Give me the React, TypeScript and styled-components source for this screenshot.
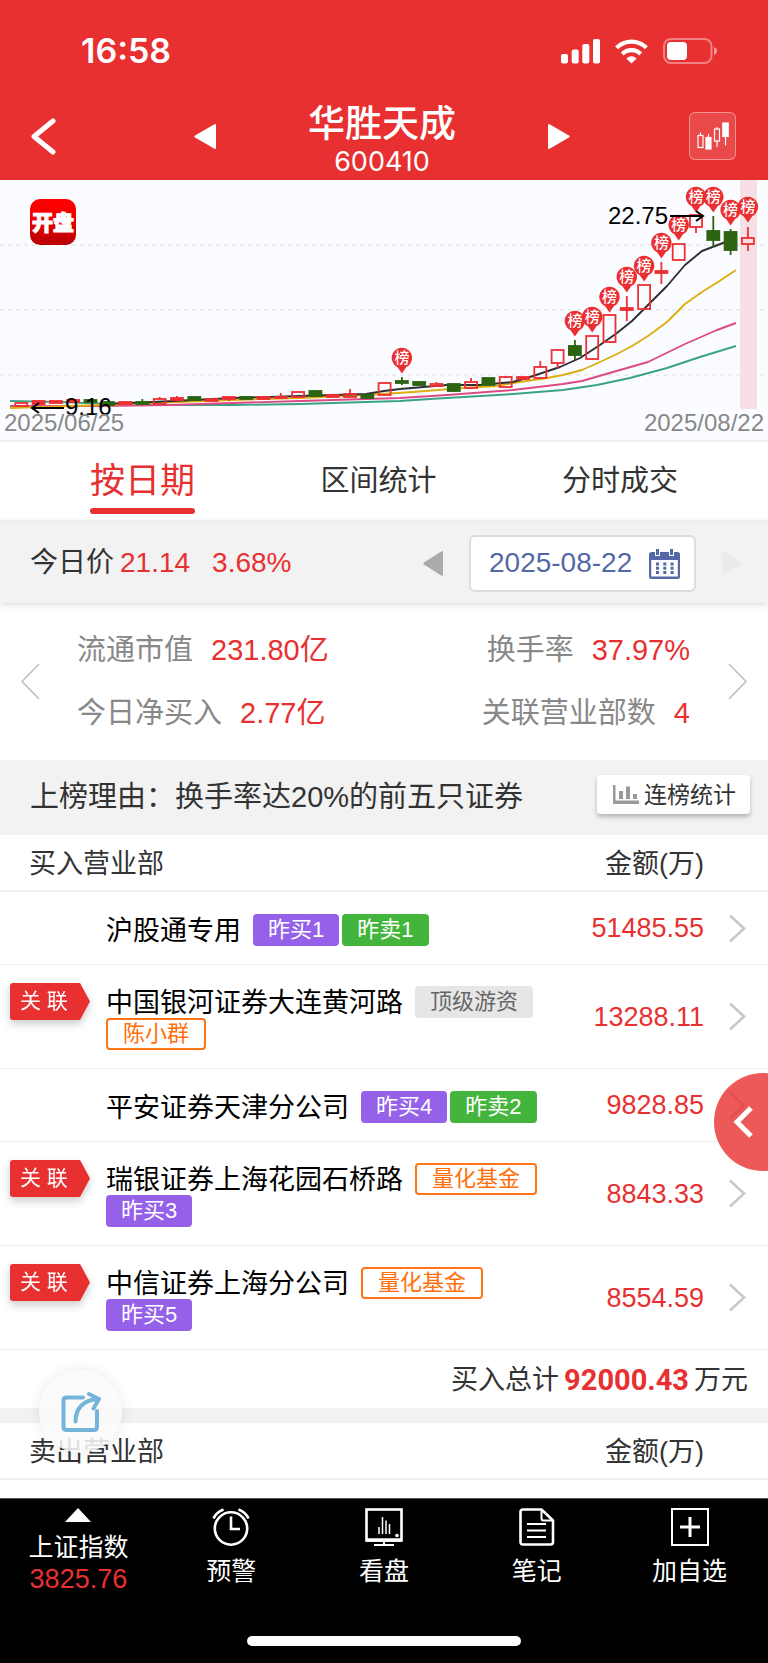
import React from "react";
import styled, { createGlobalStyle, css } from "styled-components";

const RED = "#e83030";
const SANS = '"Liberation Sans", "Noto Sans CJK SC", sans-serif';
const UI = 'Inter, "Noto Sans CJK SC", sans-serif';

const GlobalStyle = createGlobalStyle`
  *, *::before, *::after { box-sizing: border-box; }
  body { margin: 0; background: #fff; font-family: ${SANS}; color: #333; }
  button, input { font: inherit; color: inherit; margin: 0; padding: 0; border: 0; background: none; }
  button { cursor: pointer; }
  h1, h2, p, dl, dd, dt { margin: 0; font-weight: 400; }
  svg { display: block; }
`;

const Page = styled.div`
  width: 100%;
  overflow-x: hidden;
`;

/* ---------- header ---------- */

const Header = styled.header`
  background: ${RED};
  color: #fff;
  height: 180px;
`;

const StatusBar = styled.div`
  display: flex;
  justify-content: space-between;
  align-items: center;
  height: 94px;
  padding: 8px 51px 0 81px;
`;

const Clock = styled.span`
  font: 600 34px/40px ${UI};
`;

const StatusIcons = styled.div`
  display: flex;
  align-items: center;
  gap: 15px;
`;

const NavBar = styled.div`
  display: grid;
  grid-template-columns: 194px 1fr auto 1fr 198px;
  align-items: center;
  height: 84px;
`;

const IconButton = styled.button<{ $align?: string }>`
  display: flex;
  align-items: center;
  justify-content: ${(p) => p.$align || "center"};
`;

const BackButton = styled(IconButton)`
  padding-left: 31px;
  justify-content: flex-start;
  height: 68px;
  width: 90px;
`;

const StockTitle = styled.div`
  padding-top: 8px;
  text-align: center;
`;

const StockName = styled.h1`
  font-size: 37px;
  font-weight: 500;
  line-height: 44px;
`;

const StockCode = styled.p`
  font: 400 27px/30px ${UI};
`;

const CandleButton = styled(IconButton)`
  justify-self: end;
  width: 47px;
  height: 48px;
  margin-right: 32px;
  border: 1px solid rgba(255, 255, 255, 0.4);
  border-radius: 6px;
  background: rgba(255, 255, 255, 0.12);
`;

/* ---------- chart ---------- */

const ChartPanel = styled.section`
  background: #fbfcff;
  border-bottom: 2px solid #f2f2f2;

  svg {
    width: 100%;
    height: auto;
  }
`;

/* ---------- tabs ---------- */

const Tabs = styled.nav`
  display: flex;
  justify-content: space-between;
  padding: 0 90px;
  height: 78px;
`;

const Tab = styled.button<{ $active?: boolean }>`
  display: flex;
  flex-direction: column;
  align-items: stretch;
  justify-content: space-between;
  height: 72px;
  padding-top: 19px;
  font-size: 29px;
  line-height: 40px;
  color: #333;
  ${(p) =>
    p.$active &&
    css`
      font-size: 35px;
      color: ${RED};
      &::after {
        content: "";
        height: 6px;
        border-radius: 3px;
        background: ${RED};
      }
    `}
`;

/* ---------- price bar ---------- */

const PriceBar = styled.section`
  position: relative;
  display: flex;
  align-items: center;
  justify-content: space-between;
  height: 83px;
  padding: 3px 26px 0 30px;
  background: linear-gradient(#ededed, #f2f2f2 5px);
  box-shadow: 0 2px 6px rgba(0, 0, 0, 0.14);
  font-size: 28px;
  line-height: 40px;
`;

const Price = styled.p`
  display: flex;
  color: ${RED};

  span {
    color: #333;
  }
  span + strong {
    margin: 0 22px 0 6px;
  }
  strong {
    font-weight: 400;
  }
`;

const DatePicker = styled.div`
  display: flex;
  align-items: center;
  gap: 26px;
`;

const DateBox = styled.label`
  display: flex;
  align-items: center;
  justify-content: space-between;
  width: 227px;
  height: 57px;
  padding: 0 14px 0 18px;
  border: 2px solid #dcdcdc;
  border-radius: 6px;
  background: #fff;
  color: #5369a6;
`;

const DateInput = styled.input`
  width: 150px;
  outline: none;
`;

/* ---------- stats ---------- */

const Stats = styled.section`
  display: flex;
  align-items: center;
  justify-content: space-between;
  height: 157px;
  padding: 0 21px;
`;

const StatColumn = styled.dl<{ $right?: boolean }>`
  display: flex;
  flex-direction: column;
  gap: 23px;
  align-items: ${(p) => (p.$right ? "flex-end" : "flex-start")};
`;

const StatGroup = styled.div`
  display: flex;
  flex: 1;
  justify-content: space-between;
  padding: 0 38px 0 37px;
`;

const Stat = styled.div`
  display: flex;
  gap: 18px;
  font-size: 29px;
  line-height: 40px;

  dt {
    color: #888;
  }
  dd {
    color: ${RED};
  }
`;

/* ---------- reason ---------- */

const Reason = styled.section`
  display: flex;
  align-items: flex-start;
  justify-content: space-between;
  height: 75px;
  padding: 15px 18px 0 30px;
  background: #f2f2f2;

  h2 {
    font-size: 29px;
    line-height: 45px;
  }
`;

const StatsButton = styled.button`
  display: flex;
  align-items: center;
  gap: 5px;
  height: 39px;
  padding: 0 14px 0 16px;
  border-radius: 4px;
  background: #fff;
  box-shadow: 0 3px 4px rgba(0, 0, 0, 0.25);
  font-size: 23px;
  line-height: 30px;
`;

/* ---------- broker tables ---------- */

const Content = styled.main`
  position: relative;
`;

const BrokerTable = styled.table`
  width: 100%;
  table-layout: fixed;
  border-collapse: separate;
  border-spacing: 0;
  font-size: 27px;
  line-height: 32px;

  th {
    height: 57px;
    padding: 2px 0 0 29px;
    font-weight: 400;
    text-align: left;
    border-bottom: 2px solid #f2f2f2;
  }
  th:nth-child(2) {
    padding: 2px 0 0;
    text-align: right;
  }
  td {
    padding: 0;
    border-bottom: 1px solid #eee;
  }
`;

const LinkCol = styled.col`
  width: 106px;
`;
const AmountCol = styled.col`
  width: 144px;
`;
const ArrowCol = styled.col`
  width: 64px;
`;

const BrokerRow = styled.tr`
  height: 73px;
`;

const LinkCell = styled.td`
  vertical-align: top;
`;

const Ribbon = styled.div`
  margin: 18px 0 0 10px;
  width: 80px;
  filter: drop-shadow(0 4px 4px rgba(0, 0, 0, 0.2));

  span {
    display: block;
    height: 37px;
    padding-left: 10px;
    border-radius: 3px;
    background: ${RED};
    clip-path: polygon(0 0, 70px 0, 80px 50%, 70px 100%, 0 100%);
    color: #fff;
    font-size: 21px;
    line-height: 36px;
  }
`;

const NameCell = styled.td`
  && {
    padding: 21px 0 18px;
  }
`;

const NameWrap = styled.div`
  display: flex;
  flex-wrap: wrap;
  align-items: flex-start;
  column-gap: 3px;
`;

const BrokerName = styled.span`
  height: 32px;
  margin-right: 9px;
  color: #000;
  line-height: 34px;
`;

type Tone = "buy" | "sell" | "plain" | "fund";

const tones = {
  buy: css`
    background: #9461e8;
    color: #fff;
  `,
  sell: css`
    background: #43b53c;
    color: #fff;
  `,
  plain: css`
    background: #e6e6e6;
    color: #666;
  `,
  fund: css`
    border: 2px solid #ff7414;
    color: #ff6f0a;
  `,
};

const Tag = styled.span<{ $tone: Tone }>`
  display: flex;
  align-items: center;
  height: 32px;
  padding: 0 15px;
  border-radius: 4px;
  font-size: 22px;
  line-height: 28px;
  ${(p) => tones[p.$tone]}
`;

const AmountCell = styled.td`
  text-align: right;
  color: ${RED};
`;

const ArrowCell = styled.td`
  svg {
    margin-left: 24px;
  }
`;

const Total = styled.p`
  display: flex;
  align-items: center;
  justify-content: flex-end;
  gap: 5px;
  height: 58px;
  padding: 2px 20px 0 0;
  font-size: 27px;
  line-height: 40px;

  strong {
    color: ${RED};
    font: 700 29px/40px Roboto, sans-serif;
  }
`;

const Divider = styled.div`
  height: 15px;
  background: #f2f2f2;
`;

const NextRows = styled.div`
  height: 18px;
`;

const ShareButton = styled.button`
  && {
    position: absolute;
    left: 39px;
    bottom: 45px;
    display: flex;
    align-items: center;
    justify-content: center;
    width: 83px;
    height: 83px;
    border-radius: 50%;
    background: rgba(250, 250, 250, 0.86);
    box-shadow: 0 0 14px rgba(0, 0, 0, 0.09);
  }
`;

const DrawerButton = styled.button`
  && {
    position: absolute;
    right: -44px;
    bottom: 327px;
    display: flex;
    align-items: center;
    width: 98px;
    height: 98px;
    padding-left: 18px;
    border-radius: 50%;
    background: rgba(232, 48, 48, 0.8);
  }
`;

/* ---------- footer ---------- */

const Footer = styled.footer`
  display: flex;
  flex-direction: column;
  justify-content: space-between;
  align-items: center;
  height: 165px;
  padding-bottom: 17px;
  border-top: 1px solid #555;
  background: #000;
  color: #fff;
`;

const FooterNav = styled.nav`
  display: grid;
  grid-template-columns: repeat(5, 1fr);
  width: 100%;
  padding: 9px 2px 0;
`;

const FooterItem = styled.button`
  && {
    display: flex;
    flex-direction: column;
    align-items: center;
    gap: 8px;
    color: #fff;
    font-size: 25px;
    line-height: 34px;
  }
`;

const IndexItem = styled(FooterItem)`
  && {
    gap: 0;
    line-height: 32px;
  }
  svg {
    margin-bottom: 9px;
  }
  span + span {
    color: ${RED};
    font-size: 27px;
  }
`;

const HomeIndicator = styled.div`
  width: 274px;
  height: 10px;
  border-radius: 5px;
  background: #fff;
`;

/* ---------- icons ---------- */

const Triangle = ({ dir, color, size = 22 }: { dir: "left" | "right"; color: string; size?: number }) => (
  <svg width={size} height="27" viewBox="0 0 22 27" preserveAspectRatio="none" aria-hidden="true">
    <path
      d={dir === "left" ? "M1 12.5 20.5 1.2Q22 .6 22 2V25q0 1.4-1.5.8L1 14.5q-1.400-1 0-2Z" : "M21 12.5 1.5 1.2Q0 .6 0 2V25q0 1.4 1.5.8L21 14.5q1.400-1 0-2Z"}
      fill={color}
    />
  </svg>
);

const SignalIcon = () => (
  <svg width="39" height="25" viewBox="0 0 39 25" aria-hidden="true" fill="#fff">
    <rect x="0" y="15" width="7" height="9.5" rx="2" />
    <rect x="10.7" y="10.5" width="7" height="14" rx="2" />
    <rect x="21.3" y="5" width="7" height="19.5" rx="2" />
    <rect x="32" y="0" width="7" height="24.5" rx="2" />
  </svg>
);

const WifiIcon = () => (
  <svg width="33" height="25" viewBox="0 0 33 25" aria-hidden="true" fill="none" stroke="#fff" strokeWidth="4.2">
    <path d="M1.600 8.700a21.200 21.200 0 0 1 29.800 0" />
    <path d="M7.300 14.900a13 13 0 0 1 18.400 0" />
    <path d="M16.500 24.500 11.400 19.400q5.100-4.400 10.200 0Z" fill="#fff" stroke="none" />
  </svg>
);

const BatteryIcon = () => (
  <svg width="54" height="26" viewBox="0 0 54 26" aria-hidden="true">
    <rect x="1" y="1" width="47.5" height="24" rx="7" fill="none" stroke="#fff" strokeOpacity=".4" strokeWidth="2" />
    <path d="M51 9q3 1.200 3 4t-3 4Z" fill="#fff" fillOpacity=".5" />
    <rect x="4" y="4" width="20" height="18" rx="4" fill="#fff" />
  </svg>
);

const CandleIcon = () => (
  <svg width="34" height="30" viewBox="0 0 34 30" aria-hidden="true" fill="none" stroke="#fff" strokeWidth="1.2">
    <path d="M4.500 11.500v3M12.500 13v3M21 6v2.500M21 20v6M29.500 16v8.500" />
    <rect x="2" y="14.500" width="5" height="12" />
    <rect x="10" y="16.500" width="5" height="11.500" fill="#fff" />
    <rect x="18.500" y="8" width="5" height="12" />
    <rect x="26.800" y="2" width="5.400" height="13.500" fill="#fff" />
  </svg>
);

const CalendarIcon = () => (
  <svg width="31" height="31" viewBox="0 0 31 31" aria-hidden="true">
    <path d="M2.500 4h26q2.500 0 2.500 2.500v22q0 2.500-2.500 2.500h-26Q0 31 0 28.500v-22Q0 4 2.500 4Z" fill="#5369a6" />
    <rect x="2.200" y="12" width="26.600" height="16.500" fill="#fff" />
    <path d="M8.500 0v8M22.500 0v8" stroke="#fff" strokeWidth="5" />
    <path d="M8.500 1v6M22.500 1v6" stroke="#5369a6" strokeWidth="3" />
    <path d="M7 16h18M7 20.300h18M7 24.600h18" stroke="#5369a6" strokeWidth="3" strokeDasharray="3 4.300" />
  </svg>
);

const ThinChevron = ({ dir }: { dir: "left" | "right" }) => (
  <svg width="19" height="37" viewBox="0 0 19 37" fill="none" stroke="#bbb" strokeWidth="1.500" aria-hidden="true">
    <path d={dir === "left" ? "M18 1 1 18.500 18 36" : "M1 1 18 18.500 1 36"} />
  </svg>
);

const RowChevron = () => (
  <svg width="19" height="29" viewBox="0 0 19 29" fill="none" stroke="#c8c8c8" strokeWidth="2.600" aria-hidden="true">
    <path d="M2 1.500 16 14.500 2 27.500" />
  </svg>
);

const BarsIcon = () => (
  <svg width="26" height="19" viewBox="0 0 26 19" fill="#999" aria-hidden="true">
    <path d="M0 0h2.500v15.500H26V19H0Z" />
    <rect x="6" y="6" width="4" height="8" />
    <rect x="13" y="1.500" width="4" height="12.500" />
    <rect x="20" y="9" width="4" height="5" />
  </svg>
);

const ShareIcon = () => (
  <svg width="40" height="42" viewBox="0 0 40 42" fill="none" stroke="#74b4d9" strokeWidth="4" strokeLinecap="round" strokeLinejoin="round" aria-hidden="true">
    <path d="M22 6.500H5.500q-3 0-3 3V36q0 3 3 3H33q3 0 3-3V20" />
    <path d="M14.500 30.500Q15 10 36.500 8M28 3l10 5-5.500 9.500" />
  </svg>
);

const AlarmIcon = () => (
  <svg width="38" height="38" viewBox="0 0 38 38" fill="none" stroke="#fff" strokeWidth="2.600" aria-hidden="true">
    <circle cx="19" cy="20.500" r="16.200" />
    <path d="M1.500 10.500Q4 4.500 11.500 1.500M36.500 10.500Q34 4.500 26.500 1.500" />
    <path d="M19 8.500v12.500h9" />
  </svg>
);

const MonitorIcon = () => (
  <svg width="38" height="38" viewBox="0 0 38 38" fill="none" stroke="#fff" strokeWidth="2.600" aria-hidden="true">
    <rect x="1.500" y="1.500" width="35" height="31" />
    <path d="M1 32h36" strokeWidth="3.600" />
    <path d="M19 33v4M9 37h20" strokeWidth="2.200" />
    <path d="M14 19v7M17.500 9v17M21 12.500v13.500M24.500 16v10" strokeWidth="1.500" />
    <circle cx="32" cy="27.500" r="1.800" fill="#fff" stroke="none" />
  </svg>
);

const NoteIcon = () => (
  <svg width="36" height="38" viewBox="0 0 36 38" fill="none" stroke="#fff" strokeWidth="2.600" strokeLinejoin="round" aria-hidden="true">
    <path d="M4 1.500h18.500L34 12.500V34q0 2.500-2.500 2.500H4Q1.500 36.500 1.500 34V4Q1.500 1.500 4 1.500Z" />
    <path d="M22.500 2v8.500q0 2 2 2H33M8 16h19M8 22.500h19M8 29h19" strokeWidth="2" />
  </svg>
);

const AddIcon = () => (
  <svg width="38" height="38" viewBox="0 0 38 38" fill="none" stroke="#fff" strokeWidth="2" aria-hidden="true">
    <rect x="1" y="1" width="36" height="36" />
    <path d="M19 9v20M9 19h20" strokeWidth="3" />
  </svg>
);

/* ---------- chart data ---------- */

type Kind = "u" | "f" | "d";
/* kind (u: hollow rise, f: solid rise, d: fall), body top, body bottom, high, low */
const candles: [Kind, number, number, number, number][] = [
  ["u", 223, 226, 223, 226], ["f", 221, 224, 220, 224], ["f", 221, 223, 221, 223], ["f", 220, 222, 220, 222],
  ["d", 220, 222, 220, 222], ["d", 222, 225, 222, 225], ["f", 222, 224, 222, 225], ["d", 222, 224, 219, 224],
  ["u", 219, 224, 217, 225], ["f", 218, 220, 216, 220], ["d", 217, 220, 216, 221], ["f", 219, 221, 219, 221],
  ["f", 217, 219, 216, 221], ["d", 217, 219, 216, 219], ["f", 217, 219, 217, 220], ["f", 217, 218, 213, 218],
  ["u", 212, 217, 212, 218], ["d", 211, 216, 210, 216], ["f", 215, 217, 215, 217], ["u", 214, 217, 209, 217],
  ["d", 215, 218, 215, 219], ["u", 203, 215, 203, 215], ["d", 201, 203, 197, 205], ["d", 202, 205, 201, 206],
  ["u", 204, 206, 202, 206], ["d", 204, 211, 204, 212], ["u", 202, 208, 198, 209], ["d", 198, 205, 198, 206],
  ["u", 197, 207, 196, 208], ["f", 197, 199, 197, 199], ["u", 187, 198, 181, 199], ["u", 170, 183, 169, 188],
  ["d", 166, 175, 160, 180], ["u", 156, 179, 156, 179], ["u", 135, 162, 135, 163], ["f", 128, 130, 116, 141],
  ["u", 105, 129, 105, 130], ["f", 91, 93, 82, 104], ["u", 64, 80, 64, 81], ["u", 35, 47, 35, 53],
  ["d", 51, 60, 36, 67], ["d", 52, 70, 49, 75], ["u", 58, 64, 47, 71],
];

const pins: [number, number][] = [
  [22, 178], [32, 141], [33, 137], [34, 117], [35, 97], [36, 86], [37, 63], [38, 45], [39, 17], [40, 17], [41, 30], [42, 27],
];

const averages = [
  { color: "#3aa385", pts: "10,221 60,222 110,224 150,225 233,225 300,224 366,222 400,221 430,219 513,214 563,210 597,205 630,198 667,188 700,177 736,166" },
  { color: "#db4a87", pts: "10,226 100,226 170,225 233,223 300,221 366,219 400,218 447,215 513,210 563,204 582,201 613,192 648,182 685,164 717,150 736,143" },
  { color: "#dcae10", pts: "10,228 73,226 150,223 233,220 300,218 366,215 413,212 463,208 497,206 513,203 547,198 563,195 582,190 600,182 617,174 632,166 648,156 667,142 685,124 702,112 718,102 736,90" },
  { color: "#2f2f33", pts: "100,224 153,222 233,218 300,216 366,214 384,211 400,209 447,205 480,205 513,202 530,197 560,187 580,178 600,165 617,153 632,141 648,125 667,106 685,85 702,71 723,63 736,58" },
];

const centerOf = (i: number) => 21.3 + i * 17.3;

const KLineChart = () => (
  <svg viewBox="0 0 768 260" role="img" aria-label="华胜天成 K线图">
    <defs>
      <linearGradient id="logo" x1="0" y1="0" x2="0" y2="1">
        <stop offset="0" stopColor="#ff0000" />
        <stop offset="0.35" stopColor="#f20000" />
        <stop offset="1" stopColor="#b80006" />
      </linearGradient>
    </defs>
    <path d="M0 65H768M0 130H768M0 195H768" stroke="#dcdee4" strokeWidth="1" strokeDasharray="4 4" />
    <rect x="740" y="0" width="17" height="229" fill="#f6dfe5" />
    <rect x="30" y="19" width="46" height="46" rx="10" fill="url(#logo)" />
    <text x="53" y="50" fontFamily={SANS} fontSize="21" fontWeight="900" textAnchor="middle" fill="#fff" stroke="#fff" strokeWidth="1">
      开盘
    </text>
    {averages.map((a) => (
      <polyline key={a.color} points={a.pts} fill="none" stroke={a.color} strokeWidth="1.900" strokeLinejoin="round" />
    ))}
    {candles.map(([kind, top, bottom, high, low], i) => {
      const x = centerOf(i);
      const color = kind === "d" ? "#2c6412" : "#ee2f33";
      return (
        <g key={i} stroke={color} strokeWidth="1.800">
          <path d={`M${x} ${high}V${top}M${x} ${bottom}V${low}`} />
          <rect x={x - 6} y={top} width="12" height={bottom - top} fill={kind === "u" ? "none" : color} />
        </g>
      );
    })}
    <g stroke="#000" strokeWidth="2" fill="none">
      <path d="M64 228H33M39 223 32 228 39 233" />
    </g>
    {pins.map(([i, y]) => (
      <g key={i} transform={`translate(${centerOf(i)} ${y})`}>
        <path d="M0 15.500 -4.500 9A10.200 10.200 0 1 1 4.500 9Z" fill="#ea2e31" />
        <text y="5" fontFamily={SANS} fontSize="15" fontWeight="500" textAnchor="middle" fill="#fff">
          榜
        </text>
      </g>
    ))}
    <path d="M670 36H702M696 31 703 36 696 41" stroke="#000" strokeWidth="2" fill="none" />
    <g fontFamily={SANS} fontSize="24">
      <text x="668" y="44" textAnchor="end">22.75</text>
      <text x="65" y="235">9.16</text>
      <g fill="#888">
        <text x="4" y="251">2025/06/25</text>
        <text x="764" y="251" textAnchor="end">2025/08/22</text>
      </g>
    </g>
  </svg>
);

/* ---------- broker data ---------- */

interface Broker {
  name: string;
  linked?: boolean;
  tags: [Tone, string][];
  amount: string;
}

const buyers: Broker[] = [
  { name: "沪股通专用", tags: [["buy", "昨买1"], ["sell", "昨卖1"]], amount: "51485.55" },
  { name: "中国银河证券大连黄河路", linked: true, tags: [["plain", "顶级游资"], ["fund", "陈小群"]], amount: "13288.11" },
  { name: "平安证券天津分公司", tags: [["buy", "昨买4"], ["sell", "昨卖2"]], amount: "9828.85" },
  { name: "瑞银证券上海花园石桥路", linked: true, tags: [["fund", "量化基金"], ["buy", "昨买3"]], amount: "8843.33" },
  { name: "中信证券上海分公司", linked: true, tags: [["fund", "量化基金"], ["buy", "昨买5"]], amount: "8554.59" },
];

const Brokers = ({ title, rows }: { title: string; rows: Broker[] }) => (
  <BrokerTable>
    <colgroup>
      <LinkCol />
      <col />
      <AmountCol />
      <ArrowCol />
    </colgroup>
    <thead>
      <tr>
        <th scope="col" colSpan={2}>{title}</th>
        <th scope="col">金额(万)</th>
        <th aria-label="详情" />
      </tr>
    </thead>
    <tbody>
      {rows.map((row) => (
        <BrokerRow key={row.name}>
          <LinkCell>
            {row.linked && (
              <Ribbon>
                <span>关 联</span>
              </Ribbon>
            )}
          </LinkCell>
          <NameCell>
            <NameWrap>
              <BrokerName>{row.name}</BrokerName>
              {row.tags.map(([tone, text]) => (
                <Tag key={text} $tone={tone}>{text}</Tag>
              ))}
            </NameWrap>
          </NameCell>
          <AmountCell>{row.amount}</AmountCell>
          <ArrowCell>
            <RowChevron />
          </ArrowCell>
        </BrokerRow>
      ))}
    </tbody>
  </BrokerTable>
);

export default function App() {
  return (
    <Page>
      <GlobalStyle />
      <Header>
        <StatusBar>
          <Clock>16:58</Clock>
          <StatusIcons>
            <SignalIcon />
            <WifiIcon />
            <BatteryIcon />
          </StatusIcons>
        </StatusBar>
        <NavBar>
          <BackButton aria-label="返回">
            <svg width="25" height="37" viewBox="0 0 25 37" fill="none" stroke="#fff" strokeWidth="5" strokeLinecap="round" strokeLinejoin="round">
              <path d="M22 3 3 18.500 22 34" />
            </svg>
          </BackButton>
          <IconButton $align="flex-start" aria-label="上一只">
            <Triangle dir="left" color="#fff" />
          </IconButton>
          <StockTitle>
            <StockName>华胜天成</StockName>
            <StockCode>600410</StockCode>
          </StockTitle>
          <IconButton $align="flex-end" aria-label="下一只">
            <Triangle dir="right" color="#fff" />
          </IconButton>
          <CandleButton aria-label="K线">
            <CandleIcon />
          </CandleButton>
        </NavBar>
      </Header>

      <ChartPanel>
        <KLineChart />
      </ChartPanel>

      <Tabs>
        <Tab $active>按日期</Tab>
        <Tab>区间统计</Tab>
        <Tab>分时成交</Tab>
      </Tabs>

      <PriceBar>
        <Price>
          <span>今日价</span>
          <strong>21.14</strong>
          <strong>3.68%</strong>
        </Price>
        <DatePicker>
          <IconButton aria-label="前一日">
            <Triangle dir="left" color="#ababab" size={20} />
          </IconButton>
          <DateBox>
            <DateInput type="text" aria-label="日期" defaultValue="2025-08-22" />
            <CalendarIcon />
          </DateBox>
          <IconButton aria-label="后一日">
            <Triangle dir="right" color="#ebebeb" size={20} />
          </IconButton>
        </DatePicker>
      </PriceBar>

      <Stats>
        <IconButton aria-label="上一页">
          <ThinChevron dir="left" />
        </IconButton>
        <StatGroup>
          <StatColumn>
            <Stat><dt>流通市值</dt><dd>231.80亿</dd></Stat>
            <Stat><dt>今日净买入</dt><dd>2.77亿</dd></Stat>
          </StatColumn>
          <StatColumn $right>
            <Stat><dt>换手率</dt><dd>37.97%</dd></Stat>
            <Stat><dt>关联营业部数</dt><dd>4</dd></Stat>
          </StatColumn>
        </StatGroup>
        <IconButton aria-label="下一页">
          <ThinChevron dir="right" />
        </IconButton>
      </Stats>

      <Reason>
        <h2>上榜理由：换手率达20%的前五只证券</h2>
        <StatsButton>
          <BarsIcon />
          连榜统计
        </StatsButton>
      </Reason>

      <Content>
        <Brokers title="买入营业部" rows={buyers} />
        <Total>
          买入总计<strong>92000.43</strong>万元
        </Total>
        <Divider />
        <Brokers title="卖出营业部" rows={[]} />
        <NextRows />
        <ShareButton aria-label="分享">
          <ShareIcon />
        </ShareButton>
        <DrawerButton aria-label="展开">
          <svg width="22" height="32" viewBox="0 0 22 32" fill="none" stroke="#fff" strokeWidth="5" aria-hidden="true">
            <path d="M19 2 5 16 19 30" />
          </svg>
        </DrawerButton>
      </Content>

      <Footer>
        <FooterNav>
          <IndexItem>
            <svg width="26" height="14" viewBox="0 0 26 14" fill="#fff" aria-hidden="true">
              <path d="M13 0 26 14H0Z" />
            </svg>
            <span>上证指数</span>
            <span>3825.76</span>
          </IndexItem>
          <FooterItem><AlarmIcon />预警</FooterItem>
          <FooterItem><MonitorIcon />看盘</FooterItem>
          <FooterItem><NoteIcon />笔记</FooterItem>
          <FooterItem><AddIcon />加自选</FooterItem>
        </FooterNav>
        <HomeIndicator />
      </Footer>
    </Page>
  );
}
